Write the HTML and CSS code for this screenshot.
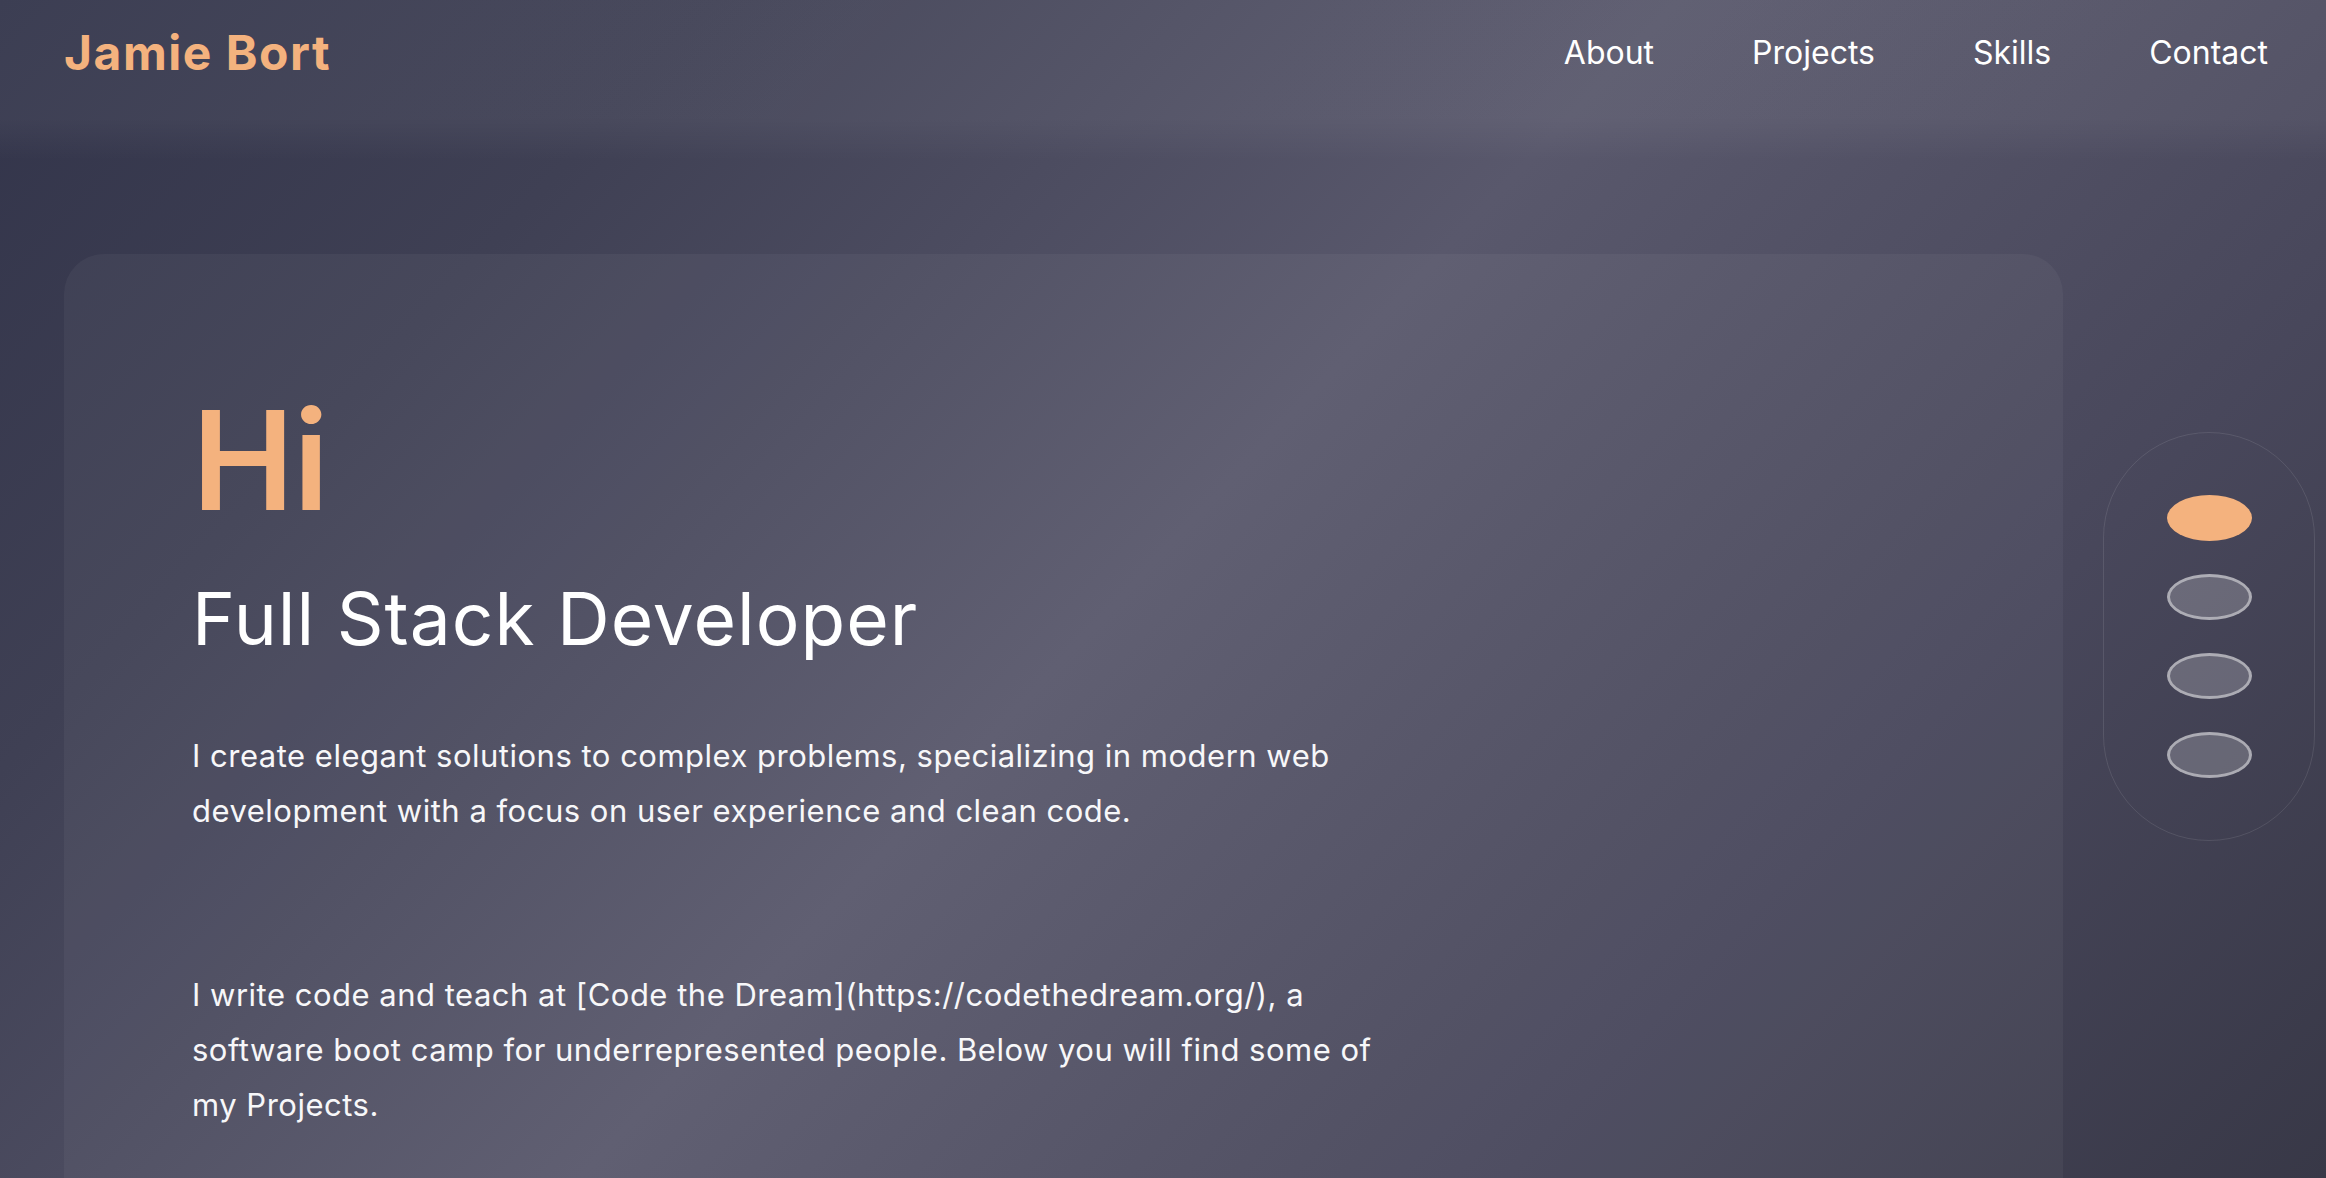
FILE: index.html
```html
<!DOCTYPE html>
<html lang="en">
<head>
<meta charset="utf-8">
<title>Jamie Bort</title>
<link rel="stylesheet" href="styles.css">
</head>
<body>
  <header class="site-header">
    <a class="logo" href="#">Jamie Bort</a>
    <nav class="main-nav">
      <a href="#about">About</a>
      <a href="#projects">Projects</a>
      <a href="#skills">Skills</a>
      <a href="#contact">Contact</a>
    </nav>
  </header>

  <main class="page">
    <section class="hero-card" id="about">
      <h1 class="hero-title">Hi</h1>
      <h2 class="hero-role">Full Stack Developer</h2>
      <p class="hero-text">I create elegant solutions to complex problems, specializing in modern web development with a focus on user experience and clean code.</p>
      <p class="hero-text hero-bio">I write code and teach at [Code the Dream](https://codethedream.org/), a software boot camp for underrepresented people. Below you will find some of my Projects.</p>
    </section>
  </main>

  <nav class="section-dots" aria-label="Sections">
    <span class="dot active"></span>
    <span class="dot"></span>
    <span class="dot"></span>
    <span class="dot"></span>
  </nav>
</body>
</html>
```

FILE: styles.css
```css
html, body {
  margin: 0;
  padding: 0;
}

body {
  min-height: 100vh;
  font-family: "Inter", "Noto Sans", sans-serif;
  color: #ffffff;
  background: linear-gradient(133deg, #32344a 0%, #3f4054 21%, #59586c 49%, #48475b 76%, #383847 100%);
  background-attachment: fixed;
  overflow: hidden;
}

a {
  color: inherit;
  text-decoration: none;
}

.site-header {
  display: flex;
  justify-content: space-between;
  align-items: center;
  height: 104px;
  padding: 0 58px 56px 64px;
  background: linear-gradient(180deg,
    rgba(255, 255, 255, 0.05) 0%,
    rgba(255, 255, 255, 0.05) 74%,
    rgba(255, 255, 255, 0) 100%);
}

.logo {
  font-size: 48px;
  font-weight: 700;
  color: #f4b27e;
  letter-spacing: 1.5px;
}

.main-nav {
  display: flex;
  gap: 98px;
}

.main-nav a {
  font-size: 32px;
  font-weight: 400;
  color: #ffffff;
}

.page {
  padding: 94px 263px 0 64px;
}

.hero-card {
  background: rgba(255, 255, 255, 0.045);
  border-radius: 40px;
  padding: 131px 128px 120px 128px;
  min-height: 900px;
}

.hero-title {
  margin: 0;
  font-size: 137px;
  font-weight: 600;
  line-height: 1.1;
  color: #f4b27e;
  letter-spacing: -1px;
}

.hero-role {
  margin: 39px 0 0 0;
  font-size: 73px;
  font-weight: 400;
  line-height: 1.2;
  letter-spacing: 1px;
}

.hero-text {
  margin: 66px 0 0 0;
  max-width: 1200px;
  font-size: 31px;
  line-height: 55px;
  letter-spacing: 0.5px;
  color: #f7f7f9;
}

.hero-bio {
  margin-top: 129px;
}

.section-dots {
  position: fixed;
  top: 432px;
  right: 11px;
  width: 212px;
  height: 409px;
  box-sizing: border-box;
  border: 1px solid rgba(255, 255, 255, 0.1);
  border-radius: 106px;
  display: flex;
  flex-direction: column;
  align-items: center;
  justify-content: center;
  gap: 33px;
}

.dot {
  display: block;
  width: 85px;
  height: 46px;
  box-sizing: border-box;
  border-radius: 50%;
  background: rgba(255, 255, 255, 0.2);
  border: 3px solid rgba(255, 255, 255, 0.45);
}

.dot.active {
  background: #f4b27e;
  border: none;
}
```
